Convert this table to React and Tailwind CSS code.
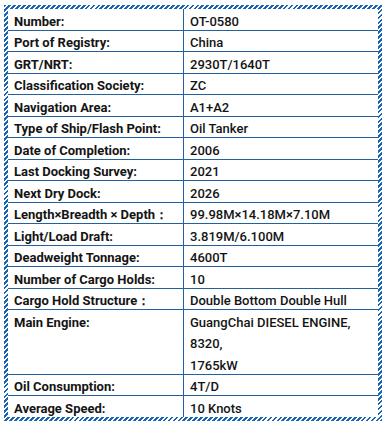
import React from "react";

const rows = [
  ["Number:", ["OT-0580"]],
  ["Port of Registry:", ["China"]],
  ["GRT/NRT:", ["2930T/1640T"]],
  ["Classification Society:", ["ZC"]],
  ["Navigation Area:", ["A1+A2"]],
  ["Type of Ship/Flash Point:", ["Oil Tanker"]],
  ["Date of Completion:", ["2006"]],
  ["Last Docking Survey:", ["2021"]],
  ["Next Dry Dock:", ["2026"]],
  ["Length×Breadth × Depth：", ["99.98M×14.18M×7.10M"]],
  ["Light/Load Draft:", ["3.819M/6.100M"]],
  ["Deadweight Tonnage:", ["4600T"]],
  ["Number of Cargo Holds:", ["10"]],
  ["Cargo Hold Structure：", ["Double Bottom Double Hull"]],
  ["Main Engine:", ["GuangChai DIESEL ENGINE,", "8320,", "1765kW"]],
  ["Oil Consumption:", ["4T/D"]],
  ["Average Speed:", ["10 Knots"]],
];

export default function App() {
  return (
    <div className="w-[387px] h-[427px] bg-white pt-[5px] pl-[4px]" style={{ fontFamily: "Roboto, 'Liberation Sans', sans-serif" }}>
      <div className="w-[378px] h-[416px] p-[4px] bg-[repeating-linear-gradient(135deg,#1a64b4_0px,#1a64b4_2px,#ffffff_2px,#ffffff_3.5px)]">
        <div className="bg-white w-full h-full flex flex-col overflow-hidden text-[13px] text-[#141414]">
          {rows.map(([label, vals], i) => (
            <div
              key={i}
              className={
                "shrink-0 grid grid-cols-[176px_1fr] " +
                (vals.length > 1 ? "h-[64.5px] " : "h-[21.5px] ") +
                (i < rows.length - 1 ? "border-b border-[#23609f]" : "")
              }
            >
              <div className="border-r border-[#23609f] pl-[6px] pt-[1.5px] font-bold leading-[21px] whitespace-nowrap">
                {label}
              </div>
              <div className="pl-[6px] pt-[1.5px] font-medium">
                {vals.map((v, j) => (
                  <div key={j} className="h-[21.5px] leading-[21px] whitespace-nowrap">{v}</div>
                ))}
              </div>
            </div>
          ))}
        </div>
      </div>
    </div>
  );
}
